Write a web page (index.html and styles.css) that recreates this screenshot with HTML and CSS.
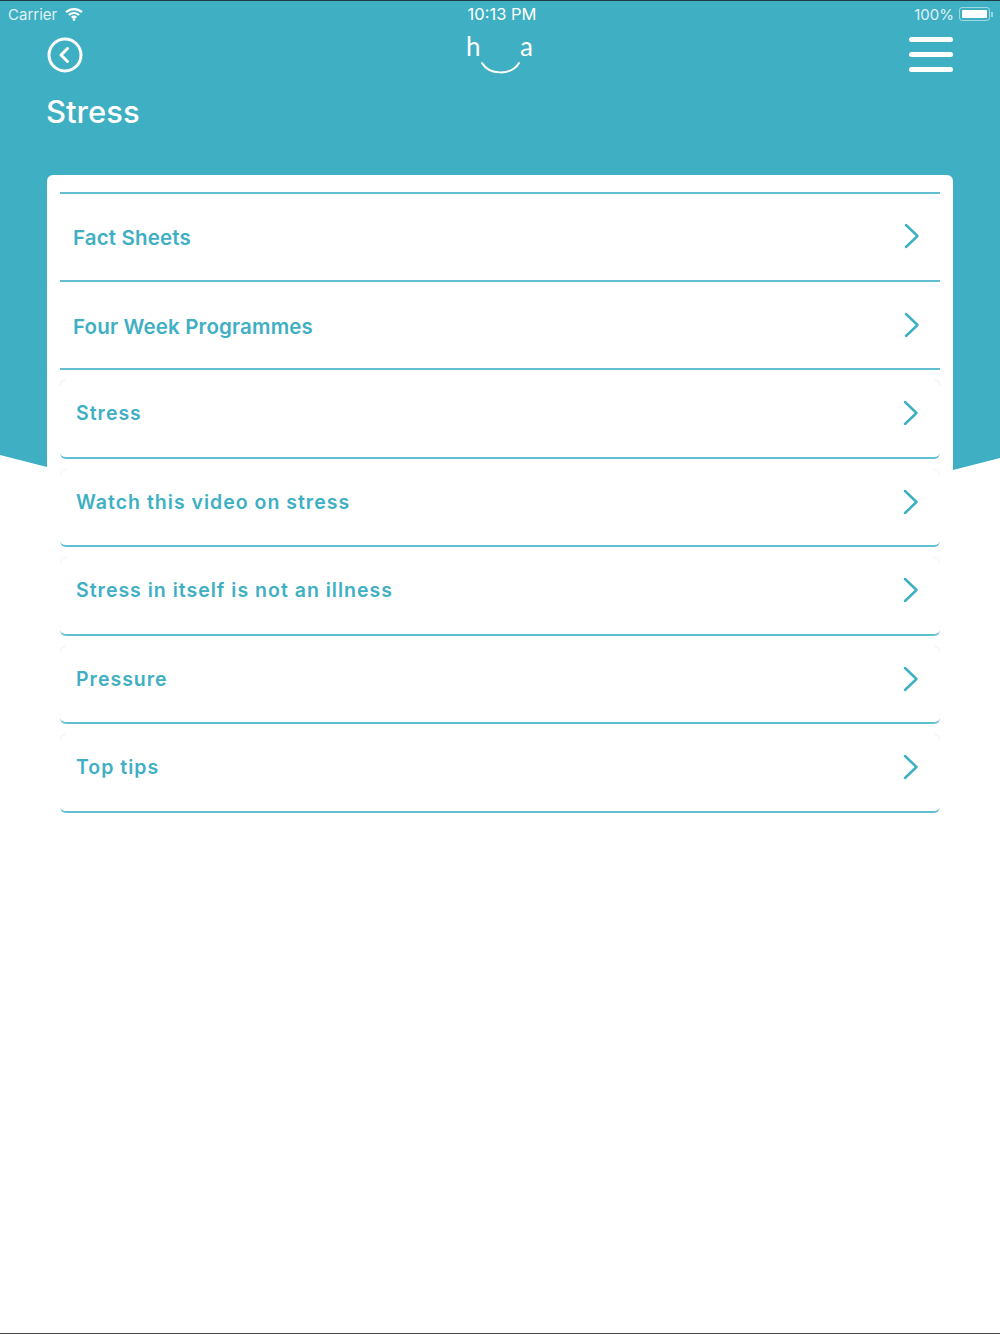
FILE: index.html
```html
<!DOCTYPE html>
<html lang="en">
<head>
    <meta charset="UTF-8">
    <meta name="viewport" content="width=device-width, initial-scale=1.0">
    <title>Stress</title>
    <link rel="stylesheet" href="styles.css">
</head>
<body>
    <div class="hero-bg"></div>

    <div class="page">
        <div class="status-bar">
            <div class="status-left">
                <span>Carrier</span>
                <svg class="wifi" width="18" height="14" viewBox="0 0 18 14">
                    <path d="M1 5.200 C5.600 1 12.400 1 17 5.200" />
                    <path d="M3.900 8 C6.900 5.400 11.100 5.400 14.100 8" />
                    <path d="M6.700 10.600 C8 9.600 10 9.600 11.300 10.600" />
                    <circle cx="9" cy="12.600" r="1.300" />
                </svg>
            </div>
            <span class="status-time">10:13 PM</span>
            <div class="status-right">
                <span>100%</span>
                <div class="battery"><div class="battery-fill"></div></div>
                <div class="battery-tip"></div>
            </div>
        </div>

        <div class="nav">
            <svg class="back" width="36" height="36" viewBox="0 0 36 36">
                <circle cx="18" cy="18" r="16" />
                <path d="M20.500 11.500 L14 18 L20.500 24.500" />
            </svg>
            <div class="logo">
                <span>h</span>
                <span>a</span>
                <svg class="smile" width="44" height="16" viewBox="0 0 44 16">
                    <path d="M3 2 C10 14 32 15 40 2" />
                </svg>
            </div>
            <div class="burger">
                <div></div>
                <div></div>
                <div></div>
            </div>
        </div>

        <h1 class="title">Stress</h1>

        <div class="card">
            <a class="row">
                <span>Fact Sheets</span>
                <svg class="chevron" width="16" height="26" viewBox="0 0 16 26"><path d="M2 2 L13.500 13 L2 24" /></svg>
            </a>
            <a class="row">
                <span>Four Week Programmes</span>
                <svg class="chevron" width="16" height="26" viewBox="0 0 16 26"><path d="M2 2 L13.500 13 L2 24" /></svg>
            </a>
            <a class="row topic">
                <span>Stress</span>
                <svg class="chevron" width="16" height="26" viewBox="0 0 16 26"><path d="M2 2 L13.500 13 L2 24" /></svg>
            </a>
            <a class="row topic">
                <span>Watch this video on stress</span>
                <svg class="chevron" width="16" height="26" viewBox="0 0 16 26"><path d="M2 2 L13.500 13 L2 24" /></svg>
            </a>
            <a class="row topic">
                <span>Stress in itself is not an illness</span>
                <svg class="chevron" width="16" height="26" viewBox="0 0 16 26"><path d="M2 2 L13.500 13 L2 24" /></svg>
            </a>
            <a class="row topic">
                <span>Pressure</span>
                <svg class="chevron" width="16" height="26" viewBox="0 0 16 26"><path d="M2 2 L13.500 13 L2 24" /></svg>
            </a>
            <a class="row topic">
                <span>Top tips</span>
                <svg class="chevron" width="16" height="26" viewBox="0 0 16 26"><path d="M2 2 L13.500 13 L2 24" /></svg>
            </a>
        </div>
    </div>
</body>
</html>
```

FILE: styles.css
```css
:root {
    --teal: #3fafc3;
    --line: #62bfd0;
}

html, body {
    height: 1334px;
}

body {
    margin: 0;
    overflow: hidden;
    position: relative;
    background: white;
    font-family: "Inter", "Noto Sans", sans-serif;
    color: white;
}

/* teal backdrop, bottom edge is a shallow curve hidden behind the card */
.hero-bg {
    position: absolute;
    top: 0;
    left: 0;
    right: 0;
    height: 480px;
    background: var(--teal);
    border-top: 1px solid #1f3a40;
    box-sizing: border-box;
    clip-path: polygon(0 455px, 47px 467px, 500px 480px, 953px 470px, 1000px 458px, 1000px 0, 0 0);
}

.page {
    position: relative;
    box-sizing: border-box;
    height: 1334px;
    padding: 0 47px;
    border-bottom: 1px solid #444;
}

.status-bar {
    display: grid;
    grid-template-columns: 1fr auto 1fr;
    align-items: center;
    height: 28px;
    margin: 0 -40px 0 -39px;
    font-size: 15px;
    color: rgba(255, 255, 255, 0.85);
}

.status-left {
    display: flex;
    align-items: center;
    gap: 8px;
}

.wifi path {
    fill: none;
    stroke: white;
    stroke-width: 2.300;
}

.wifi circle {
    fill: white;
}

.status-time {
    color: white;
    font-size: 16.500px;
    margin-left: 3px;
}

.status-right {
    display: flex;
    align-items: center;
    justify-content: flex-end;
}

.battery {
    box-sizing: border-box;
    width: 31px;
    height: 14px;
    margin-left: 5px;
    padding: 2px;
    border: 1px solid rgba(255, 255, 255, 0.5);
    border-radius: 3px;
}

.battery-fill {
    height: 100%;
    background: white;
    border-radius: 1px;
}

.battery-tip {
    width: 2px;
    height: 5px;
    background: rgba(255, 255, 255, 0.5);
    margin-left: 1px;
}

.nav {
    display: flex;
    align-items: flex-start;
    justify-content: space-between;
    height: 60px;
}

.back {
    display: block;
    margin-top: 9px;
}

.back circle, .back path {
    fill: none;
    stroke: white;
    stroke-width: 3;
    stroke-linecap: round;
    stroke-linejoin: round;
}

.logo {
    position: relative;
    display: flex;
    justify-content: space-between;
    width: 67px;
    font-size: 26px;
    line-height: 32px;
    margin: 2px 0 0 7px;
    font-family: "Lato", sans-serif;
}

.smile {
    position: absolute;
    left: 13px;
    top: 31px;
}

.smile path {
    fill: none;
    stroke: white;
    stroke-width: 2;
    stroke-linecap: round;
}

.burger {
    display: flex;
    flex-direction: column;
    gap: 10px;
    margin-top: 9px;
}

.burger div {
    width: 44px;
    height: 5px;
    background: white;
    border-radius: 3px;
}

.title {
    margin: 0 0 0 -1px;
    height: 87px;
    font-size: 31px;
    line-height: 48px;
    font-weight: 500;
}

.card {
    height: 1100px;
    padding: 16.500px 13px 0;
    background: white;
    border-radius: 6px 6px 0 0;
}

.row {
    display: flex;
    align-items: center;
    justify-content: space-between;
    box-sizing: border-box;
    height: 88.500px;
    padding: 0 20px 0 13px;
    border-bottom: 2px solid var(--line);
    color: var(--teal);
    font-size: 20.500px;
    font-weight: 600;
    letter-spacing: 0.150px;
}

.row span {
    padding-top: 4px;
}

.row:first-child {
    height: 90px;
    padding-bottom: 2px;
    border-top: 2px solid var(--line);
}

.topic {
    position: relative;
    padding: 0 21px 0 16px;
    border-radius: 0 0 6px 6px;
    font-size: 19.500px;
    letter-spacing: 1px;
}

.topic span {
    padding-top: 0;
}

/* faint rounded top corners of the inner cells */
.topic::before, .topic::after {
    content: "";
    position: absolute;
    top: 10px;
    width: 5px;
    height: 5px;
    border-top: 1px solid #e8f3f5;
}

.topic::before {
    left: 0;
    border-left: 1px solid #e8f3f5;
    border-top-left-radius: 5px;
}

.topic::after {
    right: 0;
    border-right: 1px solid #e8f3f5;
    border-top-right-radius: 5px;
}

.chevron {
    display: block;
}

.chevron path {
    fill: none;
    stroke: var(--teal);
    stroke-width: 2.500;
    stroke-linecap: round;
    stroke-linejoin: round;
}
```
